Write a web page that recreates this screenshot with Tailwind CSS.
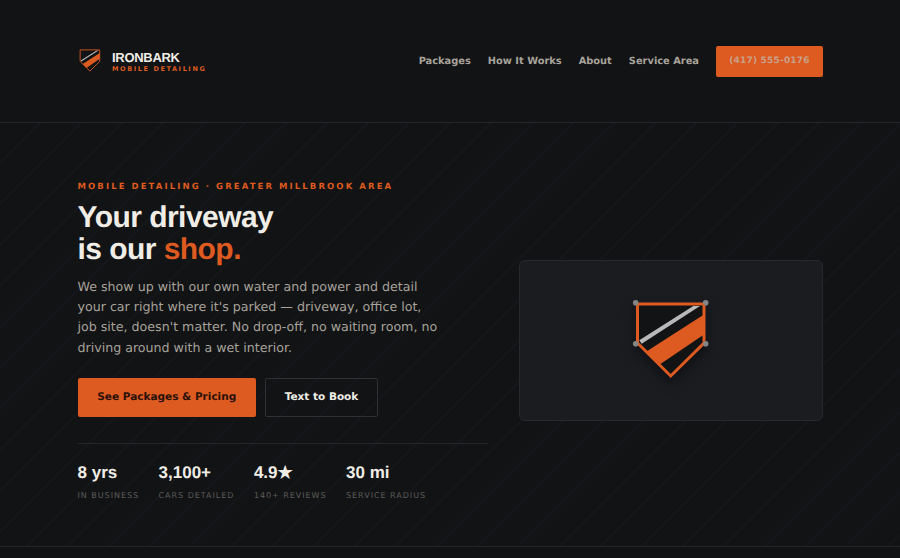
<!DOCTYPE html>
<html lang="en">
<head>
  <meta charset="UTF-8">
  <meta name="viewport" content="width=device-width, initial-scale=1.0">
  <title>Ironbark Mobile Detailing</title>
  <script src="https://cdn.jsdelivr.net/npm/@tailwindcss/browser@4"></script>
</head>
<body class="bg-[#111315] text-[#f0ede6] font-['DejaVu_Sans',sans-serif] [text-rendering:geometricPrecision] h-[558px] overflow-hidden">

  <!-- Header -->
  <header class="h-[123px] border-b border-[#24262a] pl-[77.5px] pr-[77px] pt-[46px]">
    <nav class="flex justify-between items-start">
      <a href="#" class="flex items-center gap-[11px] mt-[3px] ml-[1.5px]">
        <svg class="w-[22px] h-[23px] mb-[3px]" viewBox="4 4 74 78">
          <path d="M7.5 7H74V46L40.7 79L7.5 46Z" fill="#111315"/>
          <path d="M9.3 43.3L63.3 9H70L11.7 46.7Z" fill="#b9b9b9"/>
          <path d="M16 54.8L74 17.5V37.4L29 68.1Z" fill="#dd5a20"/>
          <path d="M7.5 7H74V46L40.7 79L7.5 46Z" fill="none" stroke="#dd5a20" stroke-width="3"/>
        </svg>
        <div>
          <div class="font-['Liberation_Sans',sans-serif] font-bold text-[13px] leading-[14px] tracking-[-0.3px] text-[#f0ede6]">IRONBARK</div>
          <div class="text-[6.5px] leading-[9px] font-bold tracking-[1.6px] text-[#dd5a20]">MOBILE DETAILING</div>
        </div>
      </a>
      <div class="flex items-center gap-[17px]">
        <a href="#" class="text-[9.85px] font-bold text-[#a8a29a] translate-y-[1px]">Packages</a>
        <a href="#" class="text-[9.85px] font-bold text-[#a8a29a] translate-y-[1px]">How It Works</a>
        <a href="#" class="text-[9.85px] font-bold text-[#a8a29a] translate-y-[1px]">About</a>
        <a href="#" class="text-[9.85px] font-bold text-[#a8a29a] translate-y-[1px]">Service Area</a>
        <a href="#" class="w-[107px] h-[31px] flex items-center justify-center rounded-[2px] bg-[#dd5a20] text-[9px] font-bold text-[#c9a189] tracking-[0.2px]">(417) 555-0176</a>
      </div>
    </nav>
  </header>

  <!-- Hero -->
  <main class="h-[424px] border-b border-[#24262a] pl-[77.5px] pr-[77px] pt-[12px] bg-[repeating-linear-gradient(135deg,#111315_0px,#111315_27px,#141619_27px,#141619_29px)] grid grid-cols-[410.5px_304px] gap-[31px] items-center">
    <section class="self-start mt-[47px]">
      <p class="text-[8.5px] leading-[11px] font-bold tracking-[2.08px] text-[#dd5a20]">MOBILE DETAILING · GREATER MILLBROOK AREA</p>
      <h1 class="font-['Liberation_Sans',sans-serif] font-bold text-[30px] leading-[32px] tracking-[-0.55px] mt-[9px]">Your driveway<br>is our <span class="text-[#dd5a20]">shop.</span></h1>
      <p class="text-[12.63px] leading-[20.4px] text-[#a8a29a] mt-[10.5px] w-[365px]">We show up with our own water and power and detail your car right where it's parked — driveway, office lot, job site, doesn't matter. No drop-off, no waiting room, no driving around with a wet interior.</p>
      <div class="flex gap-[9px] mt-[20px]">
        <a href="#" class="w-[178.5px] h-[39px] flex items-center justify-center rounded-[2px] bg-[#dd5a20] text-[#2a1208] text-[10.5px] font-bold">See Packages &amp; Pricing</a>
        <a href="#" class="w-[113px] h-[39px] flex items-center justify-center rounded-[2px] border border-[#2e3034] text-[#f0ede6] text-[10.5px] font-bold">Text to Book</a>
      </div>
      <div class="border-t border-[#24262a] mt-[26px] pt-[18px] flex gap-[19.5px]">
        <div>
          <div class="font-['Liberation_Sans',sans-serif] font-bold text-[17px] leading-[22px]">8 yrs</div>
          <div class="text-[8px] leading-[12px] tracking-[0.97px] text-[#5e5c58] mt-[6px]">IN BUSINESS</div>
        </div>
        <div>
          <div class="font-['Liberation_Sans',sans-serif] font-bold text-[17px] leading-[22px]">3,100+</div>
          <div class="text-[8px] leading-[12px] tracking-[0.97px] text-[#5e5c58] mt-[6px]">CARS DETAILED</div>
        </div>
        <div>
          <div class="font-['Liberation_Sans',sans-serif] font-bold text-[17px] leading-[22px]">4.9★</div>
          <div class="text-[8px] leading-[12px] tracking-[0.97px] text-[#5e5c58] mt-[6px]">140+ REVIEWS</div>
        </div>
        <div>
          <div class="font-['Liberation_Sans',sans-serif] font-bold text-[17px] leading-[22px]">30 mi</div>
          <div class="text-[8px] leading-[12px] tracking-[0.97px] text-[#5e5c58] mt-[6px]">SERVICE RADIUS</div>
        </div>
      </div>
    </section>

    <!-- Badge card -->
    <div class="h-[161px] rounded-[6px] bg-[#1a1c20] border border-[#26282c] flex items-center justify-center">
      <svg class="w-[82px] h-[88px] drop-shadow-[0_6px_6px_rgba(0,0,0,0.4)]" viewBox="0 0 82 88">
        <path d="M7.5 7H74V46L40.7 79L7.5 46Z" fill="#111315"/>
        <path d="M9.3 43.3L63.3 9H70L11.7 46.7Z" fill="#b9b9b9"/>
        <path d="M16 54.8L74 17.5V37.4L29 68.1Z" fill="#dd5a20"/>
        <path d="M7.5 7H74V46L40.7 79L7.5 46Z" fill="none" stroke="#dd5a20" stroke-width="3"/>
        <circle cx="5.7" cy="5.7" r="2.8" fill="#858585"/>
        <circle cx="75.7" cy="5.7" r="2.8" fill="#858585"/>
        <circle cx="5.7" cy="46.7" r="2.8" fill="#858585"/>
        <circle cx="75.7" cy="46.7" r="2.8" fill="#858585"/>
      </svg>
    </div>
  </main>
</body>
</html>
